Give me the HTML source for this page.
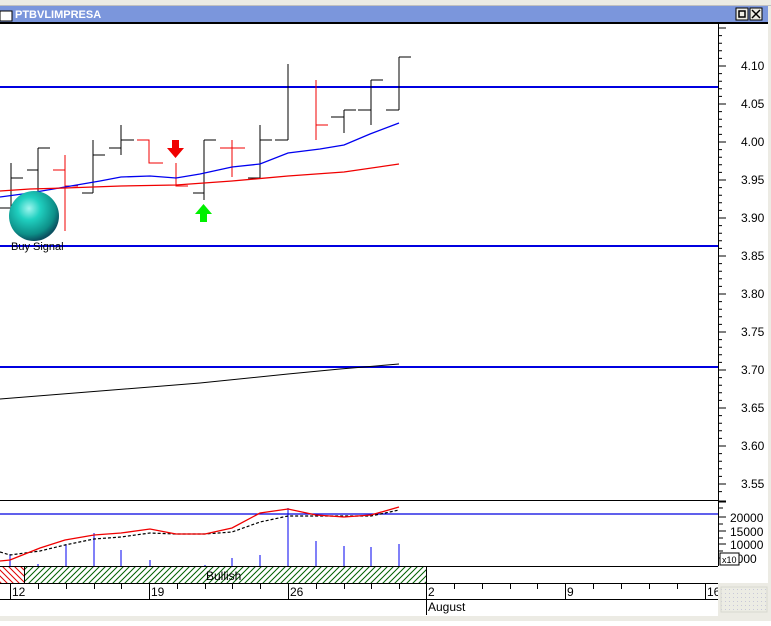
<!DOCTYPE html>
<html><head><style>
body{margin:0;width:771px;height:621px;overflow:hidden;background:#fff;font-family:"Liberation Sans",sans-serif;}
</style></head><body>
<svg width="771" height="621" viewBox="0 0 771 621" xmlns="http://www.w3.org/2000/svg" font-family="Liberation Sans, sans-serif">
<defs>
<radialGradient id="ball" cx="0.4" cy="0.35" r="0.65">
<stop offset="0" stop-color="#9ff5ee"/><stop offset="0.35" stop-color="#20d0c0"/><stop offset="0.8" stop-color="#0d8f88"/><stop offset="1" stop-color="#0b5060"/>
</radialGradient>
<pattern id="hg" width="6" height="6" patternUnits="userSpaceOnUse"><rect width="6" height="6" fill="#fff"/><path d="M0 6L6 0M-1 1L1 -1M5 7L7 5" stroke="#006000" stroke-width="1"/></pattern>
<pattern id="hr" width="6" height="6" patternUnits="userSpaceOnUse"><rect width="6" height="6" fill="#fff"/><path d="M0 0L6 6M-1 5L1 7M5 -1L7 1" stroke="#e00000" stroke-width="1"/></pattern>
<pattern id="dots" width="4" height="4" patternUnits="userSpaceOnUse"><rect width="4" height="4" fill="#ecece4"/><rect x="1" y="1" width="1" height="1" fill="#c8c8d8"/></pattern>
</defs>
<rect width="771" height="621" fill="#fff"/>
<rect x="0" y="0" width="771" height="5" fill="#ecebe4"/>
<rect x="0" y="5" width="771" height="1" fill="#c0c0c0"/>
<rect x="0" y="6" width="768" height="16" fill="#7b96dc"/>
<rect x="0" y="11" width="12" height="10" fill="#fff" stroke="#000"/>
<text x="15" y="18" font-size="11" font-weight="bold" fill="#fff">PTBVLIMPRESA</text>
<rect x="736" y="8" width="12" height="12" fill="#ecebe4" stroke="#000"/><rect x="739" y="11" width="6" height="6" fill="none" stroke="#000" stroke-width="1.5"/>
<rect x="750" y="8" width="12" height="12" fill="#ecebe4" stroke="#000"/><path d="M752 10L760 18M760 10L752 18" stroke="#000" stroke-width="1.5"/>
<rect x="0" y="22" width="768" height="2" fill="#000"/>
<rect x="768" y="6" width="3" height="615" fill="#ecebe4"/>
<!-- axis -->
<line x1="718.5" y1="24" x2="718.5" y2="566" stroke="#000"/>
<g stroke="#000">
<path d="M718 28h8M718 66h8M718 104h8M718 142h8M718 180h8M718 218h8M718 256h8M718 294h8M718 332h8M718 370h8M718 408h8M718 446h8M718 484h8"/>
<path d="M718 35.6h4M718 43.2h4M718 50.8h4M718 58.4h4M718 73.6h4M718 81.2h4M718 88.8h4M718 96.4h4M718 111.6h4M718 119.2h4M718 126.8h4M718 134.4h4M718 149.6h4M718 157.2h4M718 164.8h4M718 172.4h4M718 187.6h4M718 195.2h4M718 202.8h4M718 210.4h4M718 225.6h4M718 233.2h4M718 240.8h4M718 248.4h4M718 263.6h4M718 271.2h4M718 278.8h4M718 286.4h4M718 301.6h4M718 309.2h4M718 316.8h4M718 324.4h4M718 339.6h4M718 347.2h4M718 354.8h4M718 362.4h4M718 377.6h4M718 385.2h4M718 392.8h4M718 400.4h4M718 415.6h4M718 423.2h4M718 430.8h4M718 438.4h4M718 453.6h4M718 461.2h4M718 468.8h4M718 476.4h4M718 491.6h4"/>
</g>
<g font-size="12" fill="#000">
<text x="741" y="70">4.10</text><text x="741" y="108">4.05</text><text x="741" y="146">4.00</text><text x="741" y="184">3.95</text><text x="741" y="222">3.90</text><text x="741" y="260">3.85</text><text x="741" y="298">3.80</text><text x="741" y="336">3.75</text><text x="741" y="374">3.70</text><text x="741" y="412">3.65</text><text x="741" y="450">3.60</text><text x="741" y="488">3.55</text>
</g>
<!-- horizontal lines -->
<g stroke="#0000e0" stroke-width="2">
<line x1="0" y1="87" x2="718" y2="87"/><line x1="0" y1="246" x2="718" y2="246"/><line x1="0" y1="367" x2="718" y2="367"/>
</g>
<polyline points="0,399 100,391 200,383 288,374 340,369 399,364" fill="none" stroke="#000" stroke-width="1"/>
<!-- bars -->
<g stroke="#000" stroke-width="1" fill="none">
<path d="M11 163V208M0 208H11M11 178H23"/>
<path d="M38 148V205M27 170H38M38 148H50"/>
<path d="M93 140V193M82 193H93M93 155H105"/>
<path d="M121 125V155M109 148H121M121 140H134"/>
<path d="M204 140V200M193 193H204M204 140H216"/>
<path d="M260 125V178M248 178H260M260 140H272"/>
<path d="M288 64V140M275 140H288"/>
<path d="M344 110V133M331 117H344M344 110H356"/>
<path d="M371 80V125M358 110H371M371 80H383"/>
<path d="M399 57V110M386 110H399M399 57H411"/>
</g>
<g stroke="#f00000" stroke-width="1" fill="none">
<path d="M65 155V231M53 170H65M65 186H78"/>
<path d="M137 140H149V163H163"/>
<path d="M176 163V186H188"/>
<path d="M232 140V177M220 148H245"/>
<path d="M316 80V140M316 125H328"/>
</g>
<polyline points="0,197 30,193 65,187 100,181 121,177 150,176 176,178 200,174 232,167 260,164 288,153 320,149 344,145 370,134 399,123" fill="none" stroke="#0000f0" stroke-width="1.3"/>
<polyline points="0,191 30,189 65,188 121,186 176,185 232,181 288,176 344,172 399,164" fill="none" stroke="#f00000" stroke-width="1.3"/>
<!-- arrows -->
<path d="M172 140h7v8h5l-8.5 10l-8.5-10h5z" fill="#f00000"/>
<path d="M200 222h7v-8h5l-8.5-10l-8.5 10h5z" fill="#00f000"/>
<circle cx="34" cy="216" r="25" fill="url(#ball)"/>
<text x="11" y="250" font-size="11" fill="#000">Buy Signal</text>
<!-- lower panel -->
<line x1="0" y1="500.5" x2="718" y2="500.5" stroke="#000"/>
<line x1="718" y1="501.5" x2="726" y2="501.5" stroke="#000" stroke-width="2"/>
<line x1="0" y1="514" x2="718" y2="514" stroke="#0000e0" stroke-width="1.3"/>
<g stroke="#0000f0" stroke-width="1">
<path d="M10 566V554M38 566V564M66 566V544M94 566V533M121 566V550M150 566V560M205 566V565M232 566V558M260 566V555M288 566V508M316 566V541M344 566V546M371 566V547M399 566V544"/>
</g>
<polyline points="0,552 10,555 25,553 40,551 65,545 94,539 121,537 150,533 176,534 205,534 232,532 260,522 288,516 316,516 344,516 371,516 399,510" fill="none" stroke="#000" stroke-width="1.2" stroke-dasharray="3,2"/>
<polyline points="0,561 10,560 25,554 40,548 65,540 94,535 121,533 150,529 176,534 205,534 232,528 260,513 288,509 316,515 344,517 371,515 399,507" fill="none" stroke="#f00000" stroke-width="1.3"/>
<g stroke="#000"><path d="M718 508h5M718 517h8M718 524h5M718 531h8M718 538h5M718 544h8M718 551h5M718 558h8"/></g>
<g font-size="12" fill="#000"><text x="730" y="522">20000</text><text x="730" y="536">15000</text><text x="730" y="549">10000</text><text x="730" y="563">5000</text></g>
<rect x="720" y="553" width="19" height="12" fill="#fff" stroke="#000"/><text x="722" y="563" font-size="9">x10</text>
<!-- hatched band -->
<line x1="0" y1="566.5" x2="718" y2="566.5" stroke="#000"/>
<rect x="0" y="567" width="24" height="16" fill="url(#hr)"/>
<rect x="24" y="567" width="402" height="16" fill="url(#hg)"/>
<line x1="24.5" y1="567" x2="24.5" y2="583" stroke="#000"/>
<text x="206" y="580" font-size="12" fill="#000">Bullish</text>
<line x1="0" y1="583.5" x2="718" y2="583.5" stroke="#000"/>
<line x1="0" y1="599.5" x2="718" y2="599.5" stroke="#000"/>
<g stroke="#000">
<path d="M10.5 583V599M149.5 583V599M288.5 583V599M426.5 567V615M565.5 583V599M705.5 583V599"/>
<path d="M38.5 583V589M66.5 583V589M94.5 583V589M121.5 583V589M177.5 583V589M205.5 583V589M232.5 583V589M260.5 583V589M316.5 583V589M344.5 583V589M371.5 583V589M399.5 583V589M454.5 583V589M482.5 583V589M510.5 583V589M537.5 583V589M593.5 583V589M621.5 583V589M649.5 583V589M677.5 583V589"/>
</g>
<g font-size="12" fill="#000"><text x="12" y="596">12</text><text x="151" y="596">19</text><text x="290" y="596">26</text><text x="428" y="596">2</text><text x="567" y="596">9</text><text x="707" y="596">16</text><text x="428" y="611">August</text></g>
<rect x="718" y="583" width="50" height="38" fill="#ecebe4"/>
<rect x="721" y="587" width="46" height="25" fill="url(#dots)" stroke="#d8d8d0"/>
<rect x="0" y="616" width="768" height="5" fill="#ecebe4"/>
</svg>
</body></html>
